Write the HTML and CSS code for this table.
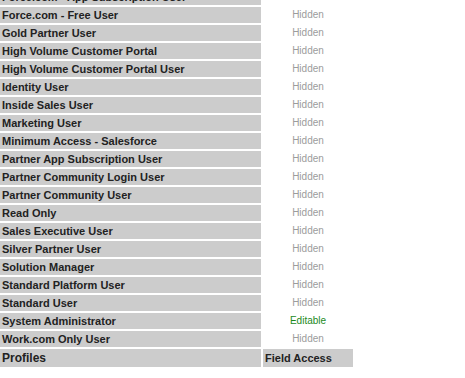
FILE: index.html
```html
<!DOCTYPE html>
<html lang="en">
<head>
<meta charset="utf-8">
<title>Field Accessibility</title>
<link rel="stylesheet" href="styles.css">
</head>
<body>
<table class="access">
  <tbody>
    <tr><td class="profile">Force.com - App Subscription User</td><td class="hidden">Hidden</td></tr>
    <tr><td class="profile">Force.com - Free User</td><td class="hidden">Hidden</td></tr>
    <tr><td class="profile">Gold Partner User</td><td class="hidden">Hidden</td></tr>
    <tr><td class="profile">High Volume Customer Portal</td><td class="hidden">Hidden</td></tr>
    <tr><td class="profile">High Volume Customer Portal User</td><td class="hidden">Hidden</td></tr>
    <tr><td class="profile">Identity User</td><td class="hidden">Hidden</td></tr>
    <tr><td class="profile">Inside Sales User</td><td class="hidden">Hidden</td></tr>
    <tr><td class="profile">Marketing User</td><td class="hidden">Hidden</td></tr>
    <tr><td class="profile">Minimum Access - Salesforce</td><td class="hidden">Hidden</td></tr>
    <tr><td class="profile">Partner App Subscription User</td><td class="hidden">Hidden</td></tr>
    <tr><td class="profile">Partner Community Login User</td><td class="hidden">Hidden</td></tr>
    <tr><td class="profile">Partner Community User</td><td class="hidden">Hidden</td></tr>
    <tr><td class="profile">Read Only</td><td class="hidden">Hidden</td></tr>
    <tr><td class="profile">Sales Executive User</td><td class="hidden">Hidden</td></tr>
    <tr><td class="profile">Silver Partner User</td><td class="hidden">Hidden</td></tr>
    <tr><td class="profile">Solution Manager</td><td class="hidden">Hidden</td></tr>
    <tr><td class="profile">Standard Platform User</td><td class="hidden">Hidden</td></tr>
    <tr><td class="profile">Standard User</td><td class="hidden">Hidden</td></tr>
    <tr><td class="profile">System Administrator</td><td class="editable">Editable</td></tr>
    <tr><td class="profile">Work.com Only User</td><td class="hidden">Hidden</td></tr>
    <tr class="head">
      <th class="head-profiles">Profiles</th>
      <th class="head-access">Field Access</th>
    </tr>
  </tbody>
</table>
</body>
</html>
```
FILE: styles.css
```css
html, body {
  margin: 0;
  padding: 0;
  background: #fff;
}

body {
  font-family: "Liberation Sans", Arial, sans-serif;
  color: #222;
}

.access {
  border-collapse: separate;
  border-spacing: 2px;
  margin: -13px 0 0 -2px;
}

.access td,
.access th {
  padding: 0 2px;
  height: 16px;
  line-height: 16px;
  white-space: nowrap;
  vertical-align: middle;
}

.profile {
  width: 257px;
  background: #ccc;
  font-size: 11px;
  font-weight: bold;
  color: #222;
}

.hidden,
.editable {
  width: 86px;
  text-align: center;
  font-size: 10px;
}

.hidden {
  color: #9c9c9c;
}

.editable {
  color: #1b8a1b;
}

.access .head th {
  height: 18px;
  line-height: 18px;
  background: #ccc;
  text-align: left;
  font-weight: bold;
  color: #222;
}

.head-profiles {
  font-size: 12px;
}

.head-access {
  font-size: 11px;
}
```
